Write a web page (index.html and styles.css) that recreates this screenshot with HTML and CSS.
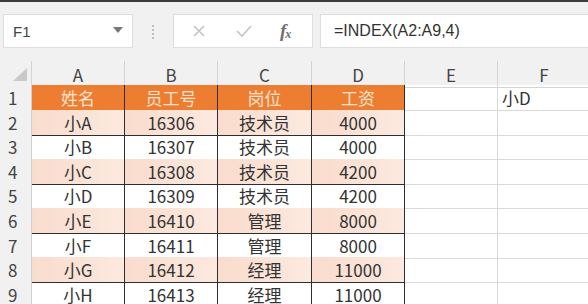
FILE: index.html
```html
<!DOCTYPE html>
<html lang="zh-CN">
<head>
  <meta charset="UTF-8" />
  <title>INDEX</title>
  <link rel="stylesheet" href="styles.css">
</head>
<body>
  <div id="sheet">
    <div class="topline"></div>

    <div class="toolbar">
      <div class="namebox">
        <span>F1</span>
        <svg class="caret" width="10" height="6" viewBox="0 0 10 6"><path d="M0 0h10L5 6z" fill="#777"/></svg>
      </div>
      <div class="dots"><i></i><i></i><i></i><i></i></div>
      <div class="fxbox">
        <svg width="14" height="14" viewBox="0 0 14 14"><path d="M2 2l10 10M12 2L2 12" stroke="#c4c4c4" stroke-width="1.6" fill="none"/></svg>
        <svg width="16" height="14" viewBox="0 0 16 14"><path d="M1 7l5 5L15 2" stroke="#c4c4c4" stroke-width="1.6" fill="none"/></svg>
        <span class="fx">f<sub>x</sub></span>
      </div>
      <div class="formula">=INDEX(A2:A9,4)</div>
    </div>

    <div class="grid">
      <div class="row colhead">
        <div class="corner"><svg width="14" height="13" viewBox="0 0 14 13"><path d="M14 0v13H0z" fill="#c9c9c9"/></svg></div>
        <div>A</div><div>B</div><div>C</div><div>D</div><div>E</div><div>F</div><div></div>
      </div>

      <div class="row head">
        <div class="num">1</div>
        <div class="t">姓名</div><div class="t">员工号</div><div class="t">岗位</div><div class="t">工资</div>
        <div class="c"></div><div class="c left">小D</div><div class="c"></div>
      </div>

      <div class="row odd">
        <div class="num">2</div>
        <div class="t">小A</div><div class="t">16306</div><div class="t">技术员</div><div class="t">4000</div>
        <div class="c"></div><div class="c"></div><div class="c"></div>
      </div>
      <div class="row">
        <div class="num">3</div>
        <div class="t">小B</div><div class="t">16307</div><div class="t">技术员</div><div class="t">4000</div>
        <div class="c"></div><div class="c"></div><div class="c"></div>
      </div>
      <div class="row odd">
        <div class="num">4</div>
        <div class="t">小C</div><div class="t">16308</div><div class="t">技术员</div><div class="t">4200</div>
        <div class="c"></div><div class="c"></div><div class="c"></div>
      </div>
      <div class="row">
        <div class="num">5</div>
        <div class="t">小D</div><div class="t">16309</div><div class="t">技术员</div><div class="t">4200</div>
        <div class="c"></div><div class="c"></div><div class="c"></div>
      </div>
      <div class="row odd">
        <div class="num">6</div>
        <div class="t">小E</div><div class="t">16410</div><div class="t">管理</div><div class="t">8000</div>
        <div class="c"></div><div class="c"></div><div class="c"></div>
      </div>
      <div class="row">
        <div class="num">7</div>
        <div class="t">小F</div><div class="t">16411</div><div class="t">管理</div><div class="t">8000</div>
        <div class="c"></div><div class="c"></div><div class="c"></div>
      </div>
      <div class="row odd">
        <div class="num">8</div>
        <div class="t">小G</div><div class="t">16412</div><div class="t">经理</div><div class="t">11000</div>
        <div class="c"></div><div class="c"></div><div class="c"></div>
      </div>
      <div class="row">
        <div class="num">9</div>
        <div class="t">小H</div><div class="t">16413</div><div class="t">经理</div><div class="t last">11000<span class="handle"></span></div>
        <div class="c"></div><div class="c"></div><div class="c"></div>
      </div>
    </div>
  </div>
</body>
</html>
```

FILE: styles.css
```css
body {
  margin: 0;
  background-color: #f1f1f1;
  font-family: "Noto Sans CJK SC", "Noto Sans", sans-serif;
  color: #333;
}

#sheet {
  width: 588px;
  height: 304px;
  overflow: hidden;
}

.topline {
  height: 2px;
  background-color: #3c3c3c;
}

.toolbar {
  height: 59px;
  display: flex;
  align-items: flex-start;
  padding-top: 12px;
  box-sizing: border-box;
}

.namebox {
  width: 130px;
  height: 34px;
  margin-left: 3px;
  background-color: #fff;
  border: 1px solid #dedede;
  box-sizing: border-box;
  display: flex;
  align-items: center;
  justify-content: space-between;
  padding: 0 9px 0 9px;
  font-family: "Liberation Sans", sans-serif;
  font-size: 15px;
  color: #444;
}

.caret {
  margin-bottom: 2px;
}

.dots {
  width: 40px;
  display: flex;
  flex-direction: column;
  align-items: center;
  gap: 2px;
  padding-top: 11px;
}

.dots i {
  width: 2px;
  height: 2px;
  background-color: #bdbdbd;
}

.fxbox {
  width: 140px;
  height: 34px;
  background-color: #fff;
  border: 1px solid #dedede;
  box-sizing: border-box;
  display: flex;
  align-items: center;
  gap: 30px;
  padding-left: 18px;
}

.fx {
  font-family: "Liberation Serif", serif;
  font-style: italic;
  font-weight: bold;
  font-size: 19px;
  color: #707070;
  margin-left: -2px;
}

.fx sub {
  font-size: 12px;
  vertical-align: -1px;
  margin-left: -1px;
}

.formula {
  flex: 1;
  height: 34px;
  margin-left: 7px;
  background-color: #fff;
  border: 1px solid #dedede;
  border-right: none;
  box-sizing: border-box;
  padding-left: 13px;
  line-height: 32px;
  font-family: "Liberation Sans", sans-serif;
  font-size: 16px;
  color: #333;
}

.grid {
  background-color: #fff;
}

.row {
  display: grid;
  grid-template-columns: 32px 93px 93px 94px 93px 93px 93px 1fr;
  height: 24.6px;
}

.row > div {
  border-right: 1px solid #d9d9d9;
  border-bottom: 1px solid #d9d9d9;
  box-sizing: border-box;
  display: flex;
  align-items: center;
  justify-content: center;
  font-size: 17px;
  white-space: nowrap;
}

.colhead {
  height: 24px;
  background-color: #f1f1f1;
}

.colhead > div {
  border-bottom: 1px solid #d4d4d4;
  border-right: 1px solid #d4d4d4;
  color: #444;
  padding-top: 1px;
}

.corner {
  justify-content: flex-end !important;
  padding-right: 4px;
}

.num {
  background-color: #f1f1f1;
  border-right-color: #cfcfcf !important;
  justify-content: flex-start !important;
  padding-left: 8px;
  color: #444;
}

.t {
  border-right-color: #2e2e2e !important;
  border-bottom-color: #2e2e2e !important;
}

.head .t {
  background-color: #ed7d31;
  color: #fde4d0;
}

.odd .t {
  background: linear-gradient(90deg, #f9dccd, #fce9df);
}

.c.left {
  justify-content: flex-start;
  padding-left: 4px;
}

.last {
  position: relative;
}

.handle {
  position: absolute;
  right: -4px;
  bottom: -3px;
  width: 6px;
  height: 6px;
  background-color: #555;
}
```
